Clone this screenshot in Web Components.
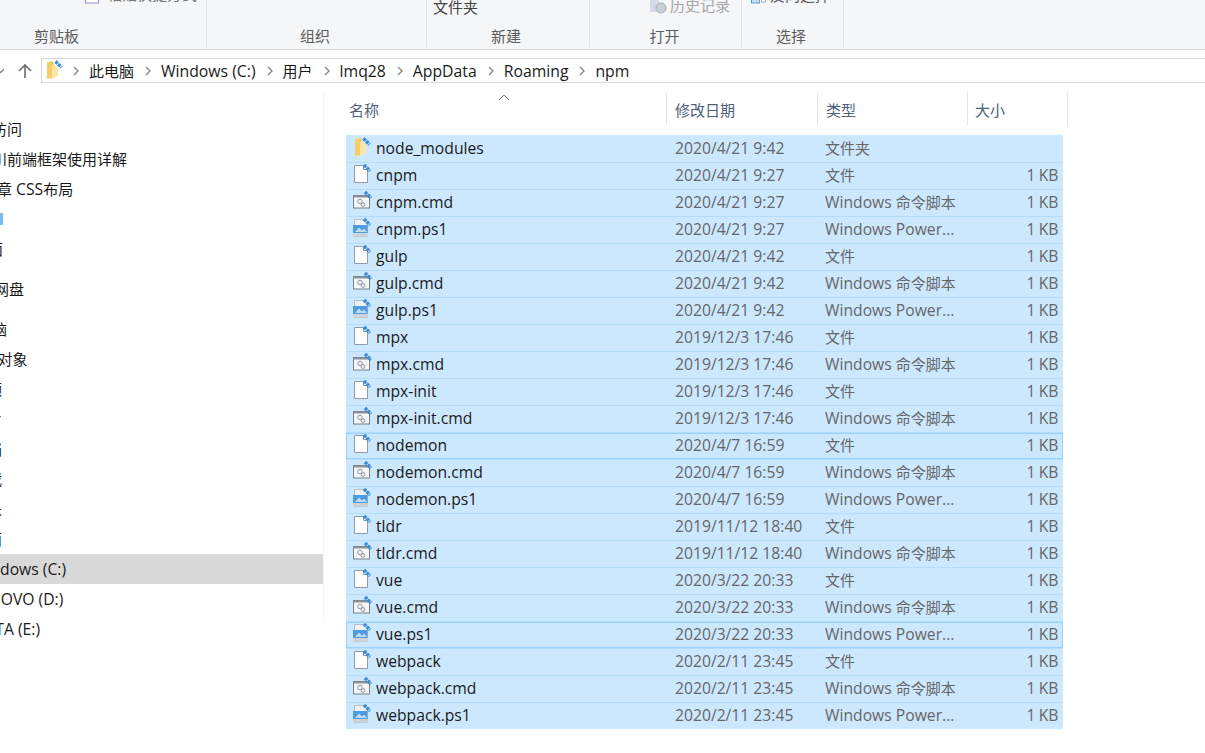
<!DOCTYPE html>
<html lang="zh"><head><meta charset="utf-8"><style>
html,body{margin:0;padding:0;height:100%;overflow:hidden;background:#fff}
body{font-family:"Open Sans","Noto Sans CJK SC",sans-serif;font-size:15px;color:#1a1a1a}
</style></head><body>
<explorer-ribbon></explorer-ribbon>
<address-bar path="此电脑,Windows (C:),用户,lmq28,AppData,Roaming,npm"></address-bar>
<main-pane></main-pane>
<script>
const SANS='"Open Sans","Noto Sans CJK SC",sans-serif';
const cjk=s=>s.replace(/[\u4e00-\u9fff]+/g,m=>`<span class="cjk">${m}</span>`);
const BLUE=(x,y)=>`<path d="M${x} ${y}l6 6" fill="none" stroke="#3a8bd8" stroke-width="3.500" stroke-dasharray="3 .8"/>`;
const SV=`width="20" height="20" viewBox="0 0 20 20" style="overflow:visible;display:block"`;
const ICONS={
folder:`<svg ${SV}><path d="M4 1.500L9 0l1.500 2.500L15 7v8l-6 2.500H4z" fill="#fbe7a4"/><path d="M4 1.500L9 0v17.500H4z" fill="#f5cf66"/><path d="M9 0l1.500 2.500L9 4z" fill="#e2b23a"/>${BLUE(12.500,.5)}</svg>`,
file:`<svg ${SV}><path d="M3.500.5h9l4 4v13h-13z" fill="#fff" stroke="#8f9ca8"/><path d="M12.500.5v4h4" fill="#e9eef3" stroke="#8f9ca8"/>${BLUE(13,0)}</svg>`,
cmd:`<svg ${SV}><rect x="2.500" y="3.500" width="16" height="12.500" fill="#f7f7f7" stroke="#77808a"/><rect x="2.500" y="3.500" width="16" height="2" fill="#8b949c"/><circle cx="9" cy="9.500" r="2.300" fill="none" stroke="#8d96a0"/><circle cx="12" cy="12.500" r="1.900" fill="none" stroke="#8d96a0"/>${BLUE(14,0)}</svg>`,
ps1:`<svg ${SV}><path d="M3.500.5h9l4 3.500v13.500h-13z" fill="#eef1f4" stroke="#b5bdc4"/><rect x="2" y="6" width="14.500" height="8" fill="#4e9ae0"/><path d="M4 13l4-4.500 3 3 2-2 3 3.500z" fill="#bcdcf7"/><rect x="2" y="14" width="15" height="3.500" fill="#cdd3d8"/>${BLUE(13,0)}</svg>`};

class ExplorerRibbon extends HTMLElement{constructor(){super();this.attachShadow({mode:'open'}).innerHTML=`<style>
:host{display:flex;height:49px;background:#f5f6f7;border-bottom:1px solid #dadbdc;overflow:hidden;font-family:${SANS}}
.g{position:relative;box-sizing:border-box;border-right:1px solid #e2e3e4;height:47px;display:flex;flex-direction:column;align-items:center;justify-content:flex-end;color:#5c5c5c;font-size:15px;line-height:20px;padding:0 3px 1px 0}
.t{position:absolute;white-space:nowrap;font-size:15px;line-height:20px}
.d{color:#a6a6a6}
svg{position:absolute}
</style>
<div class="g" style="width:207px;padding-right:93px">剪贴板
 <svg style="left:85px;top:-6px" width="15" height="10"><rect x=".5" y="0" width="13" height="9" fill="#fff" stroke="#8f94c0"/></svg>
 <span class="t d" style="left:107px;top:-16px;color:#777">粘贴快捷方式</span></div>
<div class="g" style="width:220px">组织</div>
<div class="g" style="width:163px;padding-right:4px">新建<span class="t" style="left:6px;top:-3px;color:#444">文件夹</span></div>
<div class="g" style="width:152px;padding-right:2px">打开
 <svg style="left:60px;top:0" width="18" height="15"><rect x="0" y="0" width="9" height="12" fill="#d5d8e8"/><circle cx="11" cy="8" r="5" fill="#c9ced6" stroke="#a8adb5"/></svg>
 <span class="t d" style="left:80px;top:-5px">历史记录</span></div>
<div class="g" style="width:102px">选择
 <svg style="left:9px;top:-6px" width="16" height="10"><rect x=".5" y="0" width="8" height="9" fill="#bfe0f7" stroke="#5f9ed1"/><rect x="10.500" y="0" width="4" height="8" fill="#fff" stroke="#aaa"/></svg>
 <span class="t" style="left:28px;top:-15px;color:#555">反向选择</span></div>`}}
customElements.define('explorer-ribbon',ExplorerRibbon);

class AddressBar extends HTMLElement{constructor(){super();const parts=this.getAttribute('path').split(',');
const chev=`<svg class="c" width="8" height="12" viewBox="0 0 8 12"><path d="M2 2l4 4-4 4" fill="none" stroke="#888" stroke-width="1.400"/></svg>`;
this.attachShadow({mode:'open'}).innerHTML=`<style>
:host{display:flex;align-items:center;height:25px;margin-top:8px;font-family:${SANS};font-size:15.780px;color:#1a1a1a}
.nav{width:41px;flex:none;display:flex;align-items:center;justify-content:space-between;box-sizing:border-box;overflow:hidden}
.box{flex:1;box-sizing:border-box;height:25px;border:1px solid #d9d9d9;border-right:none;display:flex;align-items:center;padding-left:1px;background:#fff}
.i{width:20px;display:flex;margin-right:9px}
.c{flex:none;margin:0 9px 0 10px}.c:first-of-type{margin-left:0}
span{white-space:nowrap}.cjk{font-size:15px}
</style><div class="nav"><svg width="4" height="6" viewBox="0 0 4 6"><path d="M-3 1l3.500 3.500L4 1" fill="none" stroke="#888" stroke-width="1.300"/></svg><svg width="18" height="18" viewBox="0 0 18 18" style="margin-right:7px"><path d="M9 16V3M3 9l6-6 6 6" fill="none" stroke="#6f6f6f" stroke-width="1.600"/></svg></div>
<div class="box"><span class="i">${ICONS.folder}</span>${parts.map(p=>`${chev}<span>${cjk(p)}</span>`).join('')}</div>`}}
customElements.define('address-bar',AddressBar);

class NavItem extends HTMLElement{constructor(){super();this.attachShadow({mode:'open'}).innerHTML=`<style>
:host{display:flex;align-items:center;box-sizing:border-box;height:30px;overflow:hidden;white-space:nowrap;color:#1a1a1a}
:host([sel]){background:#d9d9d9}
:host([gap]){margin-top:10px}
.s{display:inline-block}
</style><span class="s"><slot></slot></span>`;
this.shadowRoot.querySelector('.s').style.marginLeft=(-(+this.getAttribute('cut')||0))+'px'}}
customElements.define('nav-item',NavItem);

class FileRow extends HTMLElement{constructor(){super();const a=k=>this.getAttribute(k)||'';
this.attachShadow({mode:'open'}).innerHTML=`<style>
:host{display:grid;grid-template-columns:329px 150px 1fr 60px;align-items:center;box-sizing:border-box;height:27px;padding-bottom:2px;background:#cce8ff;border-top:1px solid #b4dcfb;font-size:15.700px;color:#666}
:host([first]){border-top-color:#cce8ff}
:host([focus]){box-shadow:inset 0 0 0 1px #99d1ff}
.n{display:flex;align-items:center;color:#1a1a1a;padding-left:5px;gap:5px}
.n svg{flex:none}
.sz{text-align:right;padding-right:5px;letter-spacing:-.3px}
div{white-space:nowrap;overflow:hidden}
.cjk{font-size:15px}
</style><div class="n">${ICONS[a('icon')]}<span>${a('name')}</span></div><div class="dd">${a('date')}</div><div>${cjk(a('type'))}</div><div class="sz">${a('size')}</div>`;
this.shadowRoot.querySelector('.n').style.overflow='visible'}}
customElements.define('file-row',FileRow);

class HeaderCell extends HTMLElement{constructor(){super();this.attachShadow({mode:'open'}).innerHTML=`<style>
:host{display:flex;align-items:center;box-sizing:border-box;height:33px;padding-top:2px;border-right:1px solid #e5e5e5;padding-left:8px;color:#4c607a;font-size:15px;position:relative}
:host([sort]){padding-left:3px}
:host([end]){padding-left:7px}
svg{position:absolute;top:2px;left:152px}
</style><slot></slot>${this.hasAttribute('sort')?'<svg width="12" height="7"><path d="M1 6l5-5 5 5" fill="none" stroke="#777"/></svg>':''}`}}
customElements.define('header-cell',HeaderCell);

class MainPane extends HTMLElement{constructor(){super();
const F='文件',C='Windows 命令脚本',P='Windows Power...',K='1 KB';
const rows=[['node_modules','folder','2020/4/21 9:42','文件夹',''],['cnpm','file','2020/4/21 9:27',F,K],['cnpm.cmd','cmd','2020/4/21 9:27',C,K],['cnpm.ps1','ps1','2020/4/21 9:27',P,K],['gulp','file','2020/4/21 9:42',F,K],['gulp.cmd','cmd','2020/4/21 9:42',C,K],['gulp.ps1','ps1','2020/4/21 9:42',P,K],['mpx','file','2019/12/3 17:46',F,K],['mpx.cmd','cmd','2019/12/3 17:46',C,K],['mpx-init','file','2019/12/3 17:46',F,K],['mpx-init.cmd','cmd','2019/12/3 17:46',C,K],['nodemon','file','2020/4/7 16:59',F,K,1],['nodemon.cmd','cmd','2020/4/7 16:59',C,K],['nodemon.ps1','ps1','2020/4/7 16:59',P,K],['tldr','file','2019/11/12 18:40',F,K],['tldr.cmd','cmd','2019/11/12 18:40',C,K],['vue','file','2020/3/22 20:33',F,K],['vue.cmd','cmd','2020/3/22 20:33',C,K],['vue.ps1','ps1','2020/3/22 20:33',P,K,1],['webpack','file','2020/2/11 23:45',F,K],['webpack.cmd','cmd','2020/2/11 23:45',C,K],['webpack.ps1','ps1','2020/2/11 23:45',P,K]];
const nav=[['快速访问',38],['川前端框架使用详解',8],['第三章 CSS布局',33],['<i class="ic"></i>',0],['桌面',27],['百度网盘',36,1],['此电脑',38,1],['3D 对象',27],['视频',28],['图片',28],['文档',28],['下载',28],['音乐',28],['桌面',28],['Windows (C:)',28,0,1],['LENOVO (D:)',28],['DATA (E:)',26]];
this.attachShadow({mode:'open'}).innerHTML=`<style>
:host{display:flex;margin-top:9px;font-family:${SANS}}
.side{width:323px;flex:none;padding-top:22px;box-sizing:border-box;font-size:15.700px}
.cjk{font-size:15px}
.ic{display:block;width:3px;height:12px;background:#74bcf2}
.sep{width:1px;background:#f5f5f5;margin-right:22px;height:530px}
.list{width:722px}
.hd{display:grid;grid-template-columns:321px 151px 150px 100px;margin-bottom:10px}
.rows{width:717px}
</style><div class="side">${nav.map(n=>`<nav-item cut="${n[1]}"${n[2]?' gap':''}${n[3]?' sel':''}>${cjk(n[0])}</nav-item>`).join('')}</div><div class="sep"></div>
<div class="list"><div class="hd"><header-cell sort>名称</header-cell><header-cell>修改日期</header-cell><header-cell>类型</header-cell><header-cell end>大小</header-cell></div>
<div class="rows">${rows.map((r,i)=>`<file-row name="${r[0]}" icon="${r[1]}" date="${r[2]}" type="${r[3]}" size="${r[4]}"${r[5]?' focus':''}${i==0?' first':''}></file-row>`).join('')}</div></div>`}}
customElements.define('main-pane',MainPane);
</script></body></html>
